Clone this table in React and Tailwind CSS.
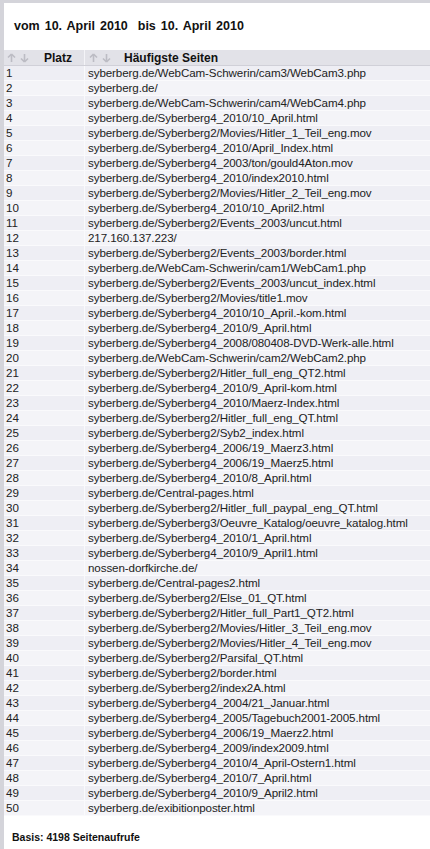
import React from "react";

const pages = [
  "syberberg.de/WebCam-Schwerin/cam3/WebCam3.php",
  "syberberg.de/",
  "syberberg.de/WebCam-Schwerin/cam4/WebCam4.php",
  "syberberg.de/Syberberg4_2010/10_April.html",
  "syberberg.de/Syberberg2/Movies/Hitler_1_Teil_eng.mov",
  "syberberg.de/Syberberg4_2010/April_Index.html",
  "syberberg.de/Syberberg4_2003/ton/gould4Aton.mov",
  "syberberg.de/Syberberg4_2010/index2010.html",
  "syberberg.de/Syberberg2/Movies/Hitler_2_Teil_eng.mov",
  "syberberg.de/Syberberg4_2010/10_April2.html",
  "syberberg.de/Syberberg2/Events_2003/uncut.html",
  "217.160.137.223/",
  "syberberg.de/Syberberg2/Events_2003/border.html",
  "syberberg.de/WebCam-Schwerin/cam1/WebCam1.php",
  "syberberg.de/Syberberg2/Events_2003/uncut_index.html",
  "syberberg.de/Syberberg2/Movies/title1.mov",
  "syberberg.de/Syberberg4_2010/10_April.-kom.html",
  "syberberg.de/Syberberg4_2010/9_April.html",
  "syberberg.de/Syberberg4_2008/080408-DVD-Werk-alle.html",
  "syberberg.de/WebCam-Schwerin/cam2/WebCam2.php",
  "syberberg.de/Syberberg2/Hitler_full_eng_QT2.html",
  "syberberg.de/Syberberg4_2010/9_April-kom.html",
  "syberberg.de/Syberberg4_2010/Maerz-Index.html",
  "syberberg.de/Syberberg2/Hitler_full_eng_QT.html",
  "syberberg.de/Syberberg2/Syb2_index.html",
  "syberberg.de/Syberberg4_2006/19_Maerz3.html",
  "syberberg.de/Syberberg4_2006/19_Maerz5.html",
  "syberberg.de/Syberberg4_2010/8_April.html",
  "syberberg.de/Central-pages.html",
  "syberberg.de/Syberberg2/Hitler_full_paypal_eng_QT.html",
  "syberberg.de/Syberberg3/Oeuvre_Katalog/oeuvre_katalog.html",
  "syberberg.de/Syberberg4_2010/1_April.html",
  "syberberg.de/Syberberg4_2010/9_April1.html",
  "nossen-dorfkirche.de/",
  "syberberg.de/Central-pages2.html",
  "syberberg.de/Syberberg2/Else_01_QT.html",
  "syberberg.de/Syberberg2/Hitler_full_Part1_QT2.html",
  "syberberg.de/Syberberg2/Movies/Hitler_3_Teil_eng.mov",
  "syberberg.de/Syberberg2/Movies/Hitler_4_Teil_eng.mov",
  "syberberg.de/Syberberg2/Parsifal_QT.html",
  "syberberg.de/Syberberg2/border.html",
  "syberberg.de/Syberberg2/index2A.html",
  "syberberg.de/Syberberg4_2004/21_Januar.html",
  "syberberg.de/Syberberg4_2005/Tagebuch2001-2005.html",
  "syberberg.de/Syberberg4_2006/19_Maerz2.html",
  "syberberg.de/Syberberg4_2009/index2009.html",
  "syberberg.de/Syberberg4_2010/4_April-Ostern1.html",
  "syberberg.de/Syberberg4_2010/7_April.html",
  "syberberg.de/Syberberg4_2010/9_April2.html",
  "syberberg.de/exibitionposter.html",
];

function Arrow({ down }) {
  return (
    <svg width="9" height="10" viewBox="0 0 9 10" className="block">
      <g transform={down ? "rotate(180 4.5 5)" : undefined}>
        <path d="M4.5 1 L1 4.5 M4.5 1 L8 4.5 M4.5 1 L4.5 9" stroke="#bcbcc4" strokeWidth="1.6" fill="none" />
      </g>
    </svg>
  );
}

function Sorters() {
  return (
    <div className="flex items-center gap-[4px]">
      <Arrow />
      <Arrow down />
    </div>
  );
}

export default function App() {
  return (
    <div
      className="w-[430px] h-[849px] bg-[#d4d4da] pt-[3px] pl-[4px] overflow-hidden"
      style={{ fontFamily: '"Liberation Sans", Arial, sans-serif' }}
    >
      <div className="bg-white h-full">
        <div className="h-[47px] flex items-center pl-[10px] pb-[1px] text-[12.5px] font-bold text-[#111] [word-spacing:1.5px]">
          vom 10. April 2010&nbsp; bis 10. April 2010
        </div>
        <div className="flex h-[16px] bg-[#e2e2e8] border-b border-[#d0d0d8] text-[12px] font-bold text-[#111]">
          <div className="w-[81px] flex items-center pl-[3px] border-r border-[#f4f4f8]">
            <Sorters />
            <span className="ml-[15px]">Platz</span>
          </div>
          <div className="flex-1 flex items-center pl-[4px]">
            <Sorters />
            <span className="ml-[13px]">Häufigste Seiten</span>
          </div>
        </div>
        <div className="text-[11.6px] text-[#222]">
          {pages.map((p, i) => (
            <div
              key={i}
              className={`flex h-[15px] items-center border-b border-[#fafafc] ${i % 2 === 0 ? "bg-[#eeeef4]" : "bg-[#f4f4f8]"}`}
            >
              <div className="w-[81px] pl-[2px] leading-none border-r border-[#fafafc] h-full flex items-center">{i + 1}</div>
              <div className="flex-1 pl-[3px] leading-none whitespace-nowrap tracking-[-0.1px]">{p}</div>
            </div>
          ))}
        </div>
        <div className="pt-[14px] pl-[8px] text-[10.5px] font-bold text-[#111]">
          Basis: 4198 Seitenaufrufe
        </div>
      </div>
    </div>
  );
}
